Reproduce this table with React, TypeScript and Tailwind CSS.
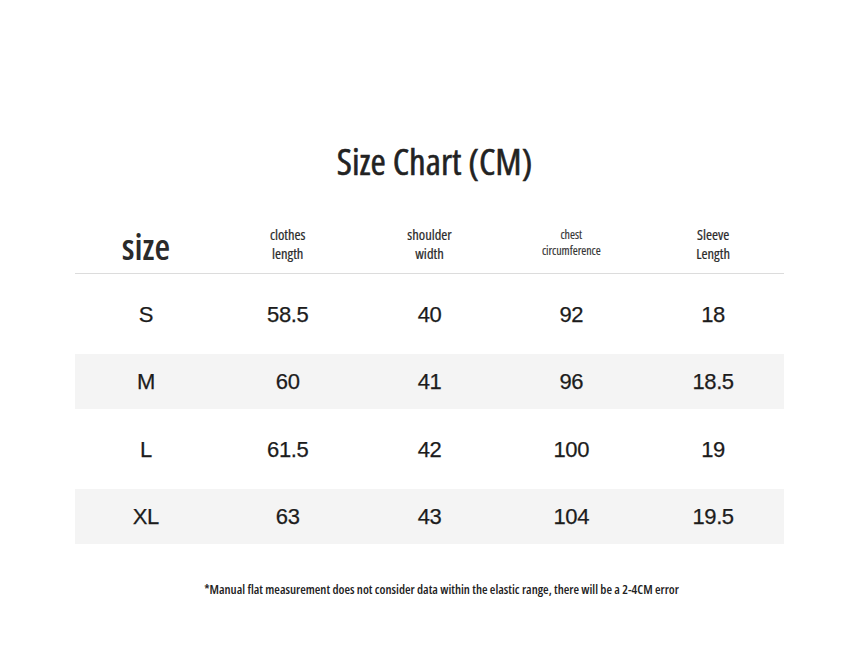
const cols = [
  { key: "size" },
  { key: "clothes", lines: ["clothes", "length"] },
  { key: "shoulder", lines: ["shoulder", "width"] },
  { key: "chest", lines: ["chest", "circumference"], small: true },
  { key: "sleeve", lines: ["Sleeve", "Length"] },
];

const rows = [
  ["S", "58.5", "40", "92", "18"],
  ["M", "60", "41", "96", "18.5"],
  ["L", "61.5", "42", "100", "19"],
  ["XL", "63", "43", "104", "19.5"],
];

const narrow = "font-['Open_Sans','Roboto',sans-serif] font-stretch-condensed";

export default function App() {
  return (
    <div className="w-[859px] h-[645px] bg-white pt-[139px]">
      <h1 className={`${narrow} ml-[10px] text-center text-[37px] leading-[44px] font-medium text-[#222] [-webkit-text-stroke:0.55px_#222]`}>
        Size Chart (CM)
      </h1>

      <div className="mx-[75px] mt-[41px] w-[709px]">
        <div className="grid grid-cols-5 h-[50px] border-b border-[#dcdcdc]">
          {cols.map((c) =>
            c.key === "size" ? (
              <div key={c.key} className={`${narrow} flex justify-center pt-[3px] text-[36px] leading-[40px] font-semibold text-[#2a2a2a]`}>
                size
              </div>
            ) : c.small ? (
              <div key={c.key} className={`${narrow} flex flex-col items-center pt-[3px] text-[12px] leading-[16px] text-[#333] [-webkit-text-stroke:0.15px_#333]`}>
                {c.lines!.map((l) => (
                  <span key={l}>{l}</span>
                ))}
              </div>
            ) : (
              <div key={c.key} className={`${narrow} flex flex-col items-center pt-[1px] text-[14.5px] leading-[19px] text-[#2a2a2a] [-webkit-text-stroke:0.2px_#2a2a2a]`}>
                {c.lines!.map((l) => (
                  <span key={l}>{l}</span>
                ))}
              </div>
            )
          )}
        </div>

        {rows.map((r, i) => (
          <div
            key={r[0]}
            className={`grid grid-cols-5 items-center ${i % 2 === 1 ? "h-[55px] bg-[#f4f4f4]" : "h-[80px] bg-white"}`}
          >
            {r.map((v, j) => (
              <div
                key={j}
                className="text-center font-['Liberation_Sans',Arial,sans-serif] text-[22px] tracking-[-0.4px] text-[#1c1c1c] [-webkit-text-stroke:0.25px_#1c1c1c]"
              >
                {v}
              </div>
            ))}
          </div>
        ))}
      </div>

      <p className={`${narrow} mt-[36px] ml-[24px] text-center text-[12.75px] leading-[18px] font-semibold text-[#222]`}>
        *Manual flat measurement does not consider data within the elastic range, there will be a 2-4CM error
      </p>
    </div>
  );
}
